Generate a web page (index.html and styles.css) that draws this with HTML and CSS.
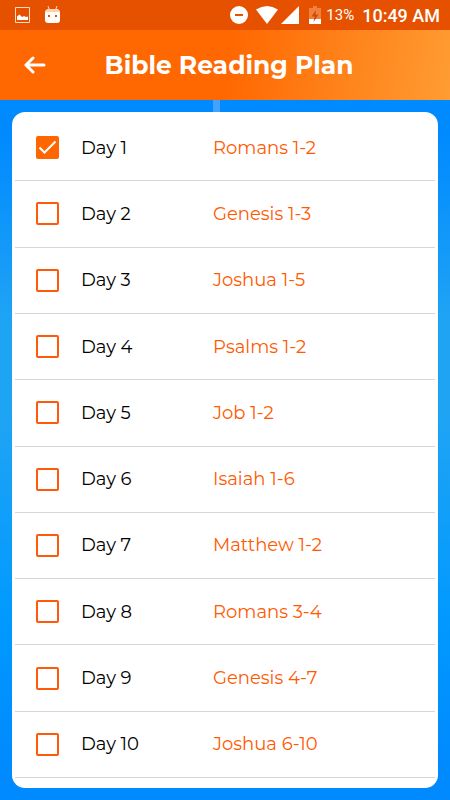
FILE: index.html
```html
<!DOCTYPE html>
<html lang="en">
<head>
<meta charset="utf-8">
<meta name="viewport" content="width=device-width, initial-scale=1">
<title>Bible Reading Plan</title>
<link rel="stylesheet" href="styles.css">
</head>
<body>
<div class="status">
  <svg class="icon-picture" width="15" height="16" viewBox="0 0 15 16" aria-hidden="true"><path fill="none" stroke="#ffd9c2" d="M.5.5h14v15H.5z"/><path fill="#fff" d="M2 13V9.500L4.500 7.500 7 10l2-1 2 1 2-.5V13z"/></svg>
  <svg class="icon-robot" width="15" height="18" viewBox="0 0 15 18" aria-hidden="true"><path stroke="#ffd9c2" d="M3 0l1.500 4M12 0l-1.500 4"/><path fill="#fff" d="M0 7q0-4 4-4h7q4 0 4 4v7q0 3-3 3H3q-3 0-3-3z"/><path fill="#ffcfb0" d="M1 5q1-2 3-2h7q2 0 3 2v1H1z"/><path fill="#e65100" d="M3 9h2v2H3zM10 9h2v2h-2z"/></svg>
  <span class="spacer"></span>
  <svg class="icon-dnd" width="18" height="18" viewBox="0 0 18 18" aria-hidden="true"><circle cx="9" cy="9" r="9" fill="#fff"/><path fill="#e65100" d="M5 8h8v2H5z"/></svg>
  <svg class="icon-wifi" width="22" height="18" viewBox="0 0 22 18" aria-hidden="true"><path fill="#fff" d="M0 3.500Q11-3.500 22 3.500L11 18z"/></svg>
  <svg class="icon-signal" width="18" height="18" viewBox="0 0 18 18" aria-hidden="true"><path fill="#fff" d="M18 0v18H0z"/></svg>
  <svg class="icon-battery" width="12" height="18" viewBox="0 0 12 18" aria-hidden="true"><path fill="#f08040" d="M4 0h4v2h4v16H0V2h4z"/><path fill="#fff" d="M0 13h12v5H0z"/><path fill="#d84800" d="M7 4L2.500 10.500H5.500L4.500 16 9.500 8.500H6.500z"/></svg>
  <span class="percent">13%</span>
  <span class="clock">10:49 AM</span>
</div>
<header class="appbar">
  <button class="back" type="button" aria-label="Back"><svg width="22" height="18" viewBox="0 0 22 18" aria-hidden="true"><path fill="none" stroke="#fff" stroke-width="3" stroke-linecap="round" stroke-linejoin="round" d="M9 2L2 9l7 7M2 9h18"/></svg></button>
  <h1>Bible Reading Plan</h1>
</header>
<main>
  <ul class="plan">
    <li><label><input type="checkbox" checked><span>Day 1</span><span class="passage">Romans 1-2</span></label></li>
    <li><label><input type="checkbox"><span>Day 2</span><span class="passage">Genesis 1-3</span></label></li>
    <li><label><input type="checkbox"><span>Day 3</span><span class="passage">Joshua 1-5</span></label></li>
    <li><label><input type="checkbox"><span>Day 4</span><span class="passage">Psalms 1-2</span></label></li>
    <li><label><input type="checkbox"><span>Day 5</span><span class="passage">Job 1-2</span></label></li>
    <li><label><input type="checkbox"><span>Day 6</span><span class="passage">Isaiah 1-6</span></label></li>
    <li><label><input type="checkbox"><span>Day 7</span><span class="passage">Matthew 1-2</span></label></li>
    <li><label><input type="checkbox"><span>Day 8</span><span class="passage">Romans 3-4</span></label></li>
    <li><label><input type="checkbox"><span>Day 9</span><span class="passage">Genesis 4-7</span></label></li>
    <li><label><input type="checkbox"><span>Day 10</span><span class="passage">Joshua 6-10</span></label></li>
  </ul>
</main>
</body>
</html>
```
FILE: styles.css
```css
* { box-sizing: border-box; }

body {
  margin: 0;
  min-height: 100vh;
  display: flex;
  flex-direction: column;
  font-family: Montserrat, Inter, sans-serif;
  color: #000;
}

.status {
  display: flex;
  align-items: center;
  height: 30px;
  padding: 0 10px 0 15px;
  background: #e65100;
  color: #fff;
  font-family: Roboto, sans-serif;
}
.status svg { flex: none; }
.icon-robot { margin-left: 15px; }
.spacer { flex: 1; }
.icon-wifi { margin-left: 8px; }
.icon-signal { margin-left: 3px; }
.icon-battery { margin-left: 10px; }
.percent { margin-left: 5px; font-size: 15px; }
.clock { margin-left: 8px; font-size: 18px; font-weight: 500; }

.appbar {
  display: grid;
  grid-template-columns: 70px 1fr 62px;
  align-items: center;
  height: 70px;
  background: linear-gradient(100deg, #ff6700 50%, #ff9c33 100%);
  color: #fff;
}
.back {
  display: flex;
  align-items: center;
  justify-content: center;
  height: 48px;
  padding: 0;
  border: 0;
  background: none;
}
h1 {
  margin: 0;
  font-size: 25px;
  line-height: 32px;
  font-weight: 700;
  text-align: center;
  white-space: nowrap;
}

main {
  flex: 1;
  display: flex;
  padding: 12px;
  background:
    linear-gradient(#40a4ff, #40a4ff) 48% 0 / 7px 12px no-repeat,
    linear-gradient(#008aff 5%, #1fa4f4 32%, #1fa4f4 45%, #0099ff 75%, #008aff 95%);
}
.plan {
  flex: 1;
  display: grid;
  grid-auto-rows: 1fr;
  margin: 0;
  padding: 3px 3px 10px;
  list-style: none;
  background: #fff;
  border-radius: 13px;
}
li {
  display: flex;
  border-bottom: 1px solid #d6d6d6;
}
label {
  flex: 1;
  display: grid;
  grid-template-columns: 45px 132px 1fr;
  align-items: center;
  min-height: 60px;
  padding-left: 21px;
  font-size: 18px;
  line-height: 24px;
}
.passage { color: #ff5a00; }

input {
  appearance: none;
  width: 23px;
  height: 23px;
  margin: 0;
  border: 2px solid #ff5a0a;
  border-radius: 2px;
}
input:checked {
  border-color: #ff6600;
  background: #ff6600 url("data:image/svg+xml,%3Csvg xmlns='http://www.w3.org/2000/svg' viewBox='0 0 19 19'%3E%3Cpath d='M1.500 9.500l5 5L17.500 3.500' fill='none' stroke='white' stroke-width='2'/%3E%3C/svg%3E") center / 19px 19px no-repeat;
}
```
